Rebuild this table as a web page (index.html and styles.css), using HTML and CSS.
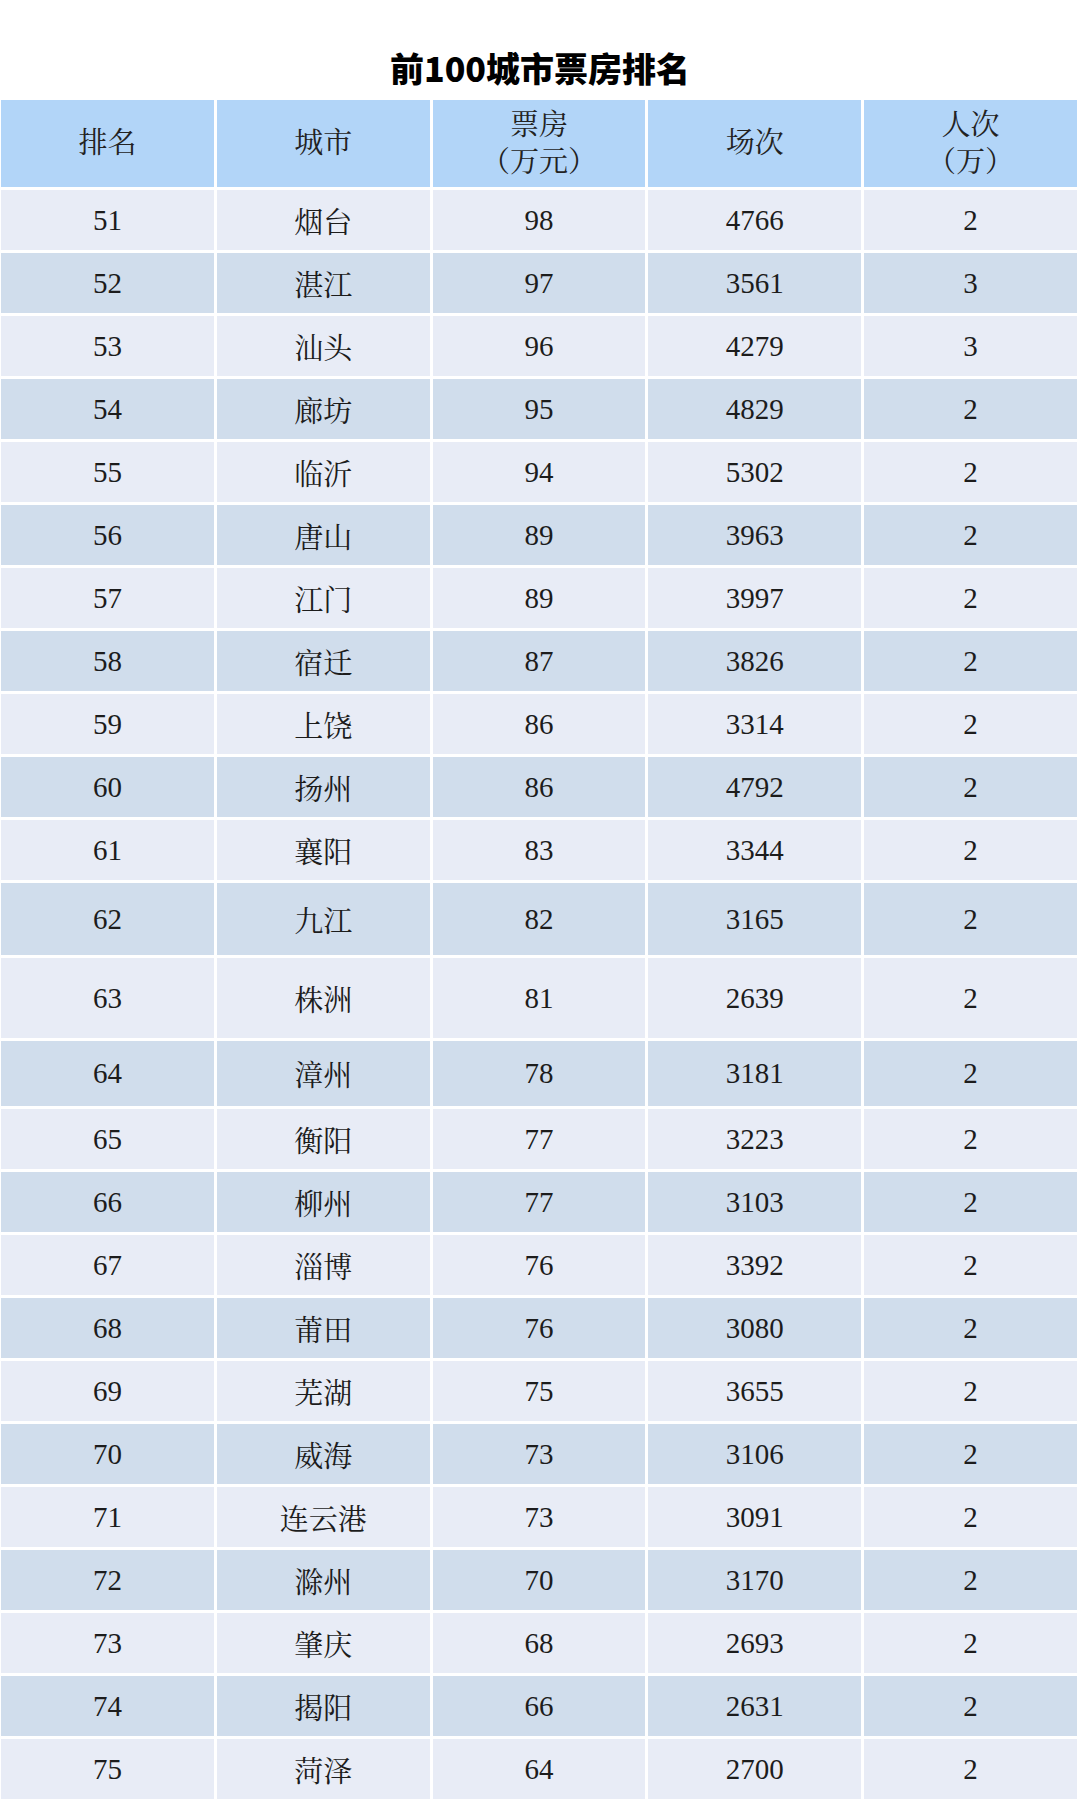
FILE: index.html
```html
<!DOCTYPE html>
<html lang="zh-CN">
<head>
<meta charset="utf-8">
<title>前100城市票房排名</title>
<link rel="stylesheet" href="styles.css">
</head>
<body>
<h1 class="title">前100城市票房排名</h1>
<div class="table">
  <div class="row head">
    <div class="cell">排名</div>
    <div class="cell">城市</div>
    <div class="cell two">票房<br>（万元）</div>
    <div class="cell">场次</div>
    <div class="cell two">人次<br>（万）</div>
  </div>
  <div class="row light"><div class="cell">51</div><div class="cell">烟台</div><div class="cell">98</div><div class="cell">4766</div><div class="cell">2</div></div>
  <div class="row dark"><div class="cell">52</div><div class="cell">湛江</div><div class="cell">97</div><div class="cell">3561</div><div class="cell">3</div></div>
  <div class="row light"><div class="cell">53</div><div class="cell">汕头</div><div class="cell">96</div><div class="cell">4279</div><div class="cell">3</div></div>
  <div class="row dark"><div class="cell">54</div><div class="cell">廊坊</div><div class="cell">95</div><div class="cell">4829</div><div class="cell">2</div></div>
  <div class="row light"><div class="cell">55</div><div class="cell">临沂</div><div class="cell">94</div><div class="cell">5302</div><div class="cell">2</div></div>
  <div class="row dark"><div class="cell">56</div><div class="cell">唐山</div><div class="cell">89</div><div class="cell">3963</div><div class="cell">2</div></div>
  <div class="row light"><div class="cell">57</div><div class="cell">江门</div><div class="cell">89</div><div class="cell">3997</div><div class="cell">2</div></div>
  <div class="row dark"><div class="cell">58</div><div class="cell">宿迁</div><div class="cell">87</div><div class="cell">3826</div><div class="cell">2</div></div>
  <div class="row light"><div class="cell">59</div><div class="cell">上饶</div><div class="cell">86</div><div class="cell">3314</div><div class="cell">2</div></div>
  <div class="row dark"><div class="cell">60</div><div class="cell">扬州</div><div class="cell">86</div><div class="cell">4792</div><div class="cell">2</div></div>
  <div class="row light"><div class="cell">61</div><div class="cell">襄阳</div><div class="cell">83</div><div class="cell">3344</div><div class="cell">2</div></div>
  <div class="row dark h72"><div class="cell">62</div><div class="cell">九江</div><div class="cell">82</div><div class="cell">3165</div><div class="cell">2</div></div>
  <div class="row light h80"><div class="cell">63</div><div class="cell">株洲</div><div class="cell">81</div><div class="cell">2639</div><div class="cell">2</div></div>
  <div class="row dark h65"><div class="cell">64</div><div class="cell">漳州</div><div class="cell">78</div><div class="cell">3181</div><div class="cell">2</div></div>
  <div class="row light"><div class="cell">65</div><div class="cell">衡阳</div><div class="cell">77</div><div class="cell">3223</div><div class="cell">2</div></div>
  <div class="row dark"><div class="cell">66</div><div class="cell">柳州</div><div class="cell">77</div><div class="cell">3103</div><div class="cell">2</div></div>
  <div class="row light"><div class="cell">67</div><div class="cell">淄博</div><div class="cell">76</div><div class="cell">3392</div><div class="cell">2</div></div>
  <div class="row dark"><div class="cell">68</div><div class="cell">莆田</div><div class="cell">76</div><div class="cell">3080</div><div class="cell">2</div></div>
  <div class="row light"><div class="cell">69</div><div class="cell">芜湖</div><div class="cell">75</div><div class="cell">3655</div><div class="cell">2</div></div>
  <div class="row dark"><div class="cell">70</div><div class="cell">威海</div><div class="cell">73</div><div class="cell">3106</div><div class="cell">2</div></div>
  <div class="row light"><div class="cell">71</div><div class="cell">连云港</div><div class="cell">73</div><div class="cell">3091</div><div class="cell">2</div></div>
  <div class="row dark"><div class="cell">72</div><div class="cell">滁州</div><div class="cell">70</div><div class="cell">3170</div><div class="cell">2</div></div>
  <div class="row light"><div class="cell">73</div><div class="cell">肇庆</div><div class="cell">68</div><div class="cell">2693</div><div class="cell">2</div></div>
  <div class="row dark"><div class="cell">74</div><div class="cell">揭阳</div><div class="cell">66</div><div class="cell">2631</div><div class="cell">2</div></div>
  <div class="row light"><div class="cell">75</div><div class="cell">菏泽</div><div class="cell">64</div><div class="cell">2700</div><div class="cell">2</div></div>
</div>
</body>
</html>
```
FILE: styles.css
```css
html, body {
  margin: 0;
  padding: 0;
  background: #ffffff;
}

body {
  width: 1080px;
  overflow: hidden;
}

.title {
  margin: 49px 0 13px 0;
  height: 38px;
  line-height: 38px;
  text-align: center;
  font-family: "Noto Sans CJK SC", "Noto Sans", sans-serif;
  font-weight: 900;
  font-size: 34px;
  color: #000000;
  letter-spacing: 0;
}

.table {
  display: flex;
  flex-direction: column;
  gap: 3px;
  padding-left: 1px;
  width: 1076px;
}

.row {
  display: grid;
  grid-template-columns: repeat(5, 1fr);
  column-gap: 3px;
  height: 60px;
}

.cell {
  display: flex;
  align-items: center;
  justify-content: center;
  text-align: center;
  font-family: "Liberation Serif", "Noto Serif CJK SC", "Noto Sans CJK SC", serif;
  font-size: 29px;
  color: #1c1c1c;
}

.head {
  height: 87px;
}

.head .cell {
  background: #b2d5f8;
  line-height: 37px;
  color: #222222;
}

.light .cell {
  background: #e8ecf6;
}

.dark .cell {
  background: #d0ddec;
}

.h72 { height: 72px; }
.h80 { height: 80px; }
.h65 { height: 65px; }
```
